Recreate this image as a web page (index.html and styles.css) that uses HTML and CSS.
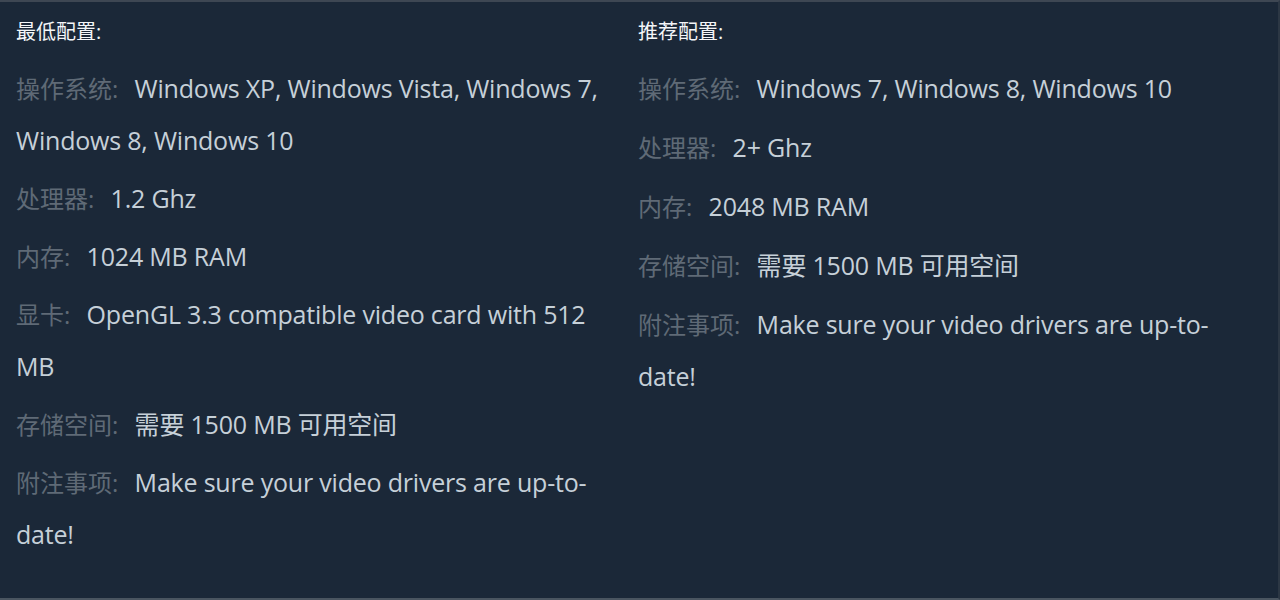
FILE: index.html
```html
<!DOCTYPE html>
<html lang="zh-CN">
<head>
    <meta charset="UTF-8">
    <meta name="viewport" content="width=device-width, initial-scale=1.0">
    <title>系统需求</title>
    <link rel="stylesheet" href="styles.css">
</head>
<body>
    <div class="sysreq">
        <div class="sysreq-col">
            <div class="sysreq-title">最低配置:</div>
            <ul class="sysreq-list">
                <li><span class="label">操作系统:</span> Windows XP, Windows Vista, Windows 7, Windows 8, Windows 10</li>
                <li><span class="label">处理器:</span> 1.2 Ghz</li>
                <li><span class="label">内存:</span> 1024 MB RAM</li>
                <li><span class="label">显卡:</span> OpenGL 3.3 compatible video card with 512 MB</li>
                <li><span class="label">存储空间:</span> 需要 1500 MB 可用空间</li>
                <li><span class="label">附注事项:</span> Make sure your video drivers are up-to-date!</li>
            </ul>
        </div>
        <div class="sysreq-col sysreq-col--right">
            <div class="sysreq-title">推荐配置:</div>
            <ul class="sysreq-list">
                <li><span class="label">操作系统:</span> Windows 7, Windows 8, Windows 10</li>
                <li><span class="label">处理器:</span> 2+ Ghz</li>
                <li><span class="label">内存:</span> 2048 MB RAM</li>
                <li><span class="label">存储空间:</span> 需要 1500 MB 可用空间</li>
                <li><span class="label">附注事项:</span> Make sure your video drivers are up-to-date!</li>
            </ul>
        </div>
    </div>
</body>
</html>
```

FILE: styles.css
```css
html, body {
    margin: 0;
    padding: 0;
    background-color: #1b2838;
}
body {
    font-family: "Open Sans", "Noto Sans CJK SC", sans-serif;
    color: #c6d0d8;
}
.sysreq {
    box-sizing: border-box;
    height: 600px;
    padding: 15px 16px 0 16px;
    border-top: 2px solid #3e4753;
    border-right: 2px solid #2c3744;
    border-bottom: 2px solid #4a5560;
    display: grid;
    grid-template-columns: 600px 1fr;
    column-gap: 22px;
}
.sysreq-title {
    font-size: 20px;
    line-height: 30px;
    color: #f4f6f8;
    margin-bottom: 15px;
}
.sysreq-list {
    list-style: none;
    margin: 0;
    padding: 0;
    font-size: 25px;
    line-height: 52px;
    letter-spacing: -0.2px;
}
.sysreq-list li {
    margin-bottom: 6px;
}
.sysreq-col--right .sysreq-list li {
    margin-bottom: 7px;
}
.label {
    color: #5f6a76;
    font-size: 24px;
    line-height: 1;
    letter-spacing: 0;
    margin-right: 10px;
}
```
